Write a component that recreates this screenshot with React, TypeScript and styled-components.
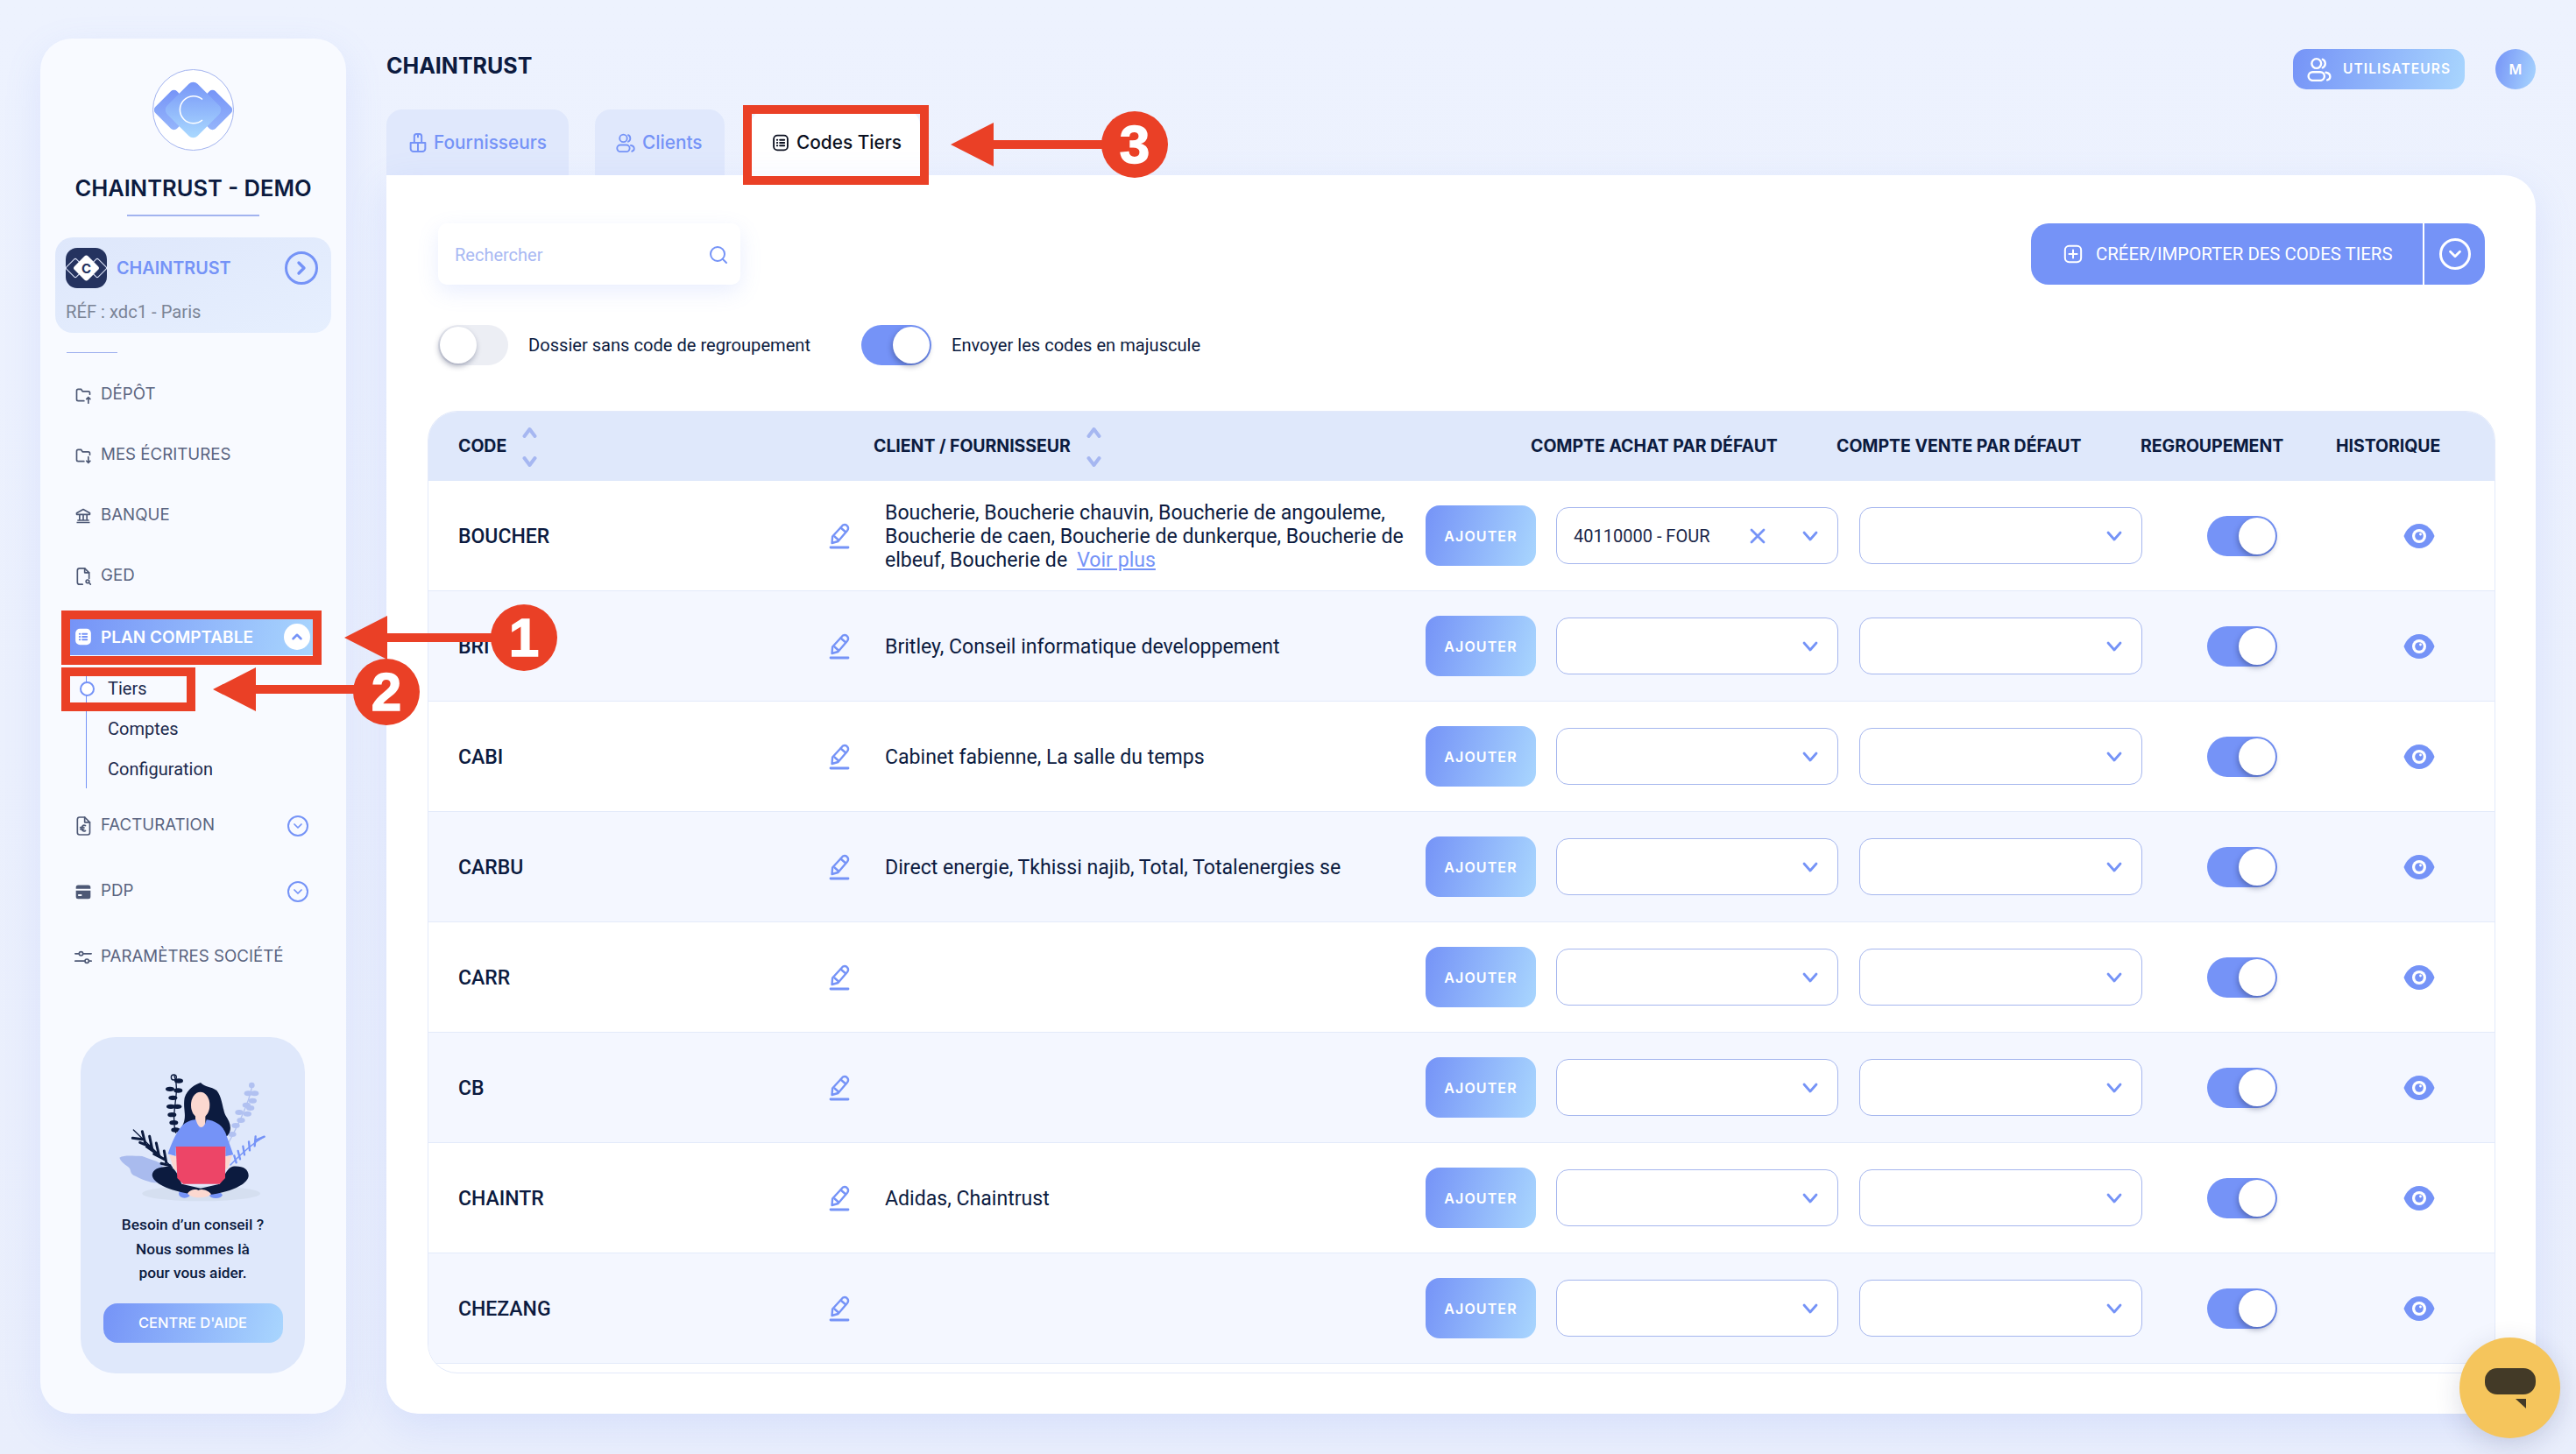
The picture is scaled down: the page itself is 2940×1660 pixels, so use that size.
import React from 'react';
import styled, { createGlobalStyle } from 'styled-components';
import { ChevronDown, ChevronUp, ChevronRight, Search } from 'lucide-react';

const BLUE = '#7593f7';
const NAVY = '#0c1b3f';
const HEAD = "'Inter', 'Liberation Sans', sans-serif";
const BODY = "'Roboto', 'Liberation Sans', sans-serif";
const GRADIENT = 'linear-gradient(105deg, #7593f7 0%, #a9d6fe 100%)';

const GlobalStyle = createGlobalStyle`
  html, body {
    margin: 0;
    padding: 0;
    background: #ecf1fd;
  }
  * {
    box-sizing: border-box;
  }
`;

// Page frame
const Page = styled.div`
  position: relative;
  display: flex;
  gap: 46px;
  width: 2940px;
  height: 1660px;
  padding: 44px 46px 46px 46px;
  overflow: hidden;
  font-family: ${BODY};
  color: ${NAVY};
  background: linear-gradient(180deg, #edf2fe 0%, #e9eefc 100%);
`;

// Sidebar
const Sidebar = styled.aside`
  display: flex;
  flex-direction: column;
  flex: 0 0 349px;
  padding: 35px 17px 46px;
  border-radius: 36px;
  background: #f8faff;
  box-shadow: 0 14px 44px rgba(117, 147, 247, 0.14);
`;

const LogoWrap = styled.div`
  display: flex;
  justify-content: center;
`;

const Brand = styled.div`
  margin-top: 26px;
  font: 600 25.5px/34px ${HEAD};
  text-align: center;
  white-space: nowrap;
`;

const BrandRule = styled.div`
  width: 151px;
  height: 2px;
  margin: 13px auto 0;
  background: #a2b3ef;
`;

const CompanyCard = styled.div`
  height: 109px;
  margin-top: 24px;
  padding: 12px 15px 0 12px;
  border-radius: 20px;
  background: linear-gradient(160deg, #dee7fb 0%, #e6effe 100%);
`;

const CompanyTop = styled.div`
  display: flex;
  align-items: center;
`;

const CompanyMark = styled.div`
  display: flex;
  align-items: center;
  justify-content: center;
  flex: 0 0 47px;
  height: 46px;
  border-radius: 13px;
  background: #25335f;
`;

const CompanyName = styled.div`
  flex: 1;
  margin-left: 11px;
  padding-top: 2px;
  font: 600 19.8px/1 ${HEAD};
  color: ${BLUE};
`;

const RoundToggle = styled.div<{ $size: number; $border: number; $filled?: boolean; $light?: boolean }>`
  display: flex;
  align-items: center;
  justify-content: center;
  flex: 0 0 ${({ $size }) => $size}px;
  height: ${({ $size }) => $size}px;
  border-radius: 50%;
  border: ${({ $border }) => $border}px solid ${({ $filled, $light }) => ($filled || $light ? '#fff' : BLUE)};
  background: ${({ $filled }) => ($filled ? '#fff' : 'transparent')};
  color: ${({ $light }) => ($light ? '#fff' : BLUE)};
`;

const CompanyRef = styled.div`
  margin-top: 15px;
  font: 400 20.2px/24px ${BODY};
  color: #7b8496;
`;

const ShortRule = styled.div`
  width: 58px;
  height: 1px;
  margin: 22px 0 13px 13px;
  background: #a2b3ef;
`;

const NavItem = styled.div<{ $tall?: boolean }>`
  display: flex;
  align-items: center;
  gap: 10px;
  height: ${({ $tall }) => ($tall ? 75 : 69)}px;
  padding: 0 26px 0 22px;
  font: 400 18.7px/1 ${HEAD};
  color: #5a6480;
  white-space: nowrap;
  svg.nav {
    flex: 0 0 20px;
    color: #4d5875;
  }
`;

const NavActive = styled.div`
  display: flex;
  align-items: center;
  gap: 10px;
  height: 42px;
  margin: 14px 21px 0 17px;
  padding: 0 3px 0 5px;
  font: 600 19px/1 ${HEAD};
  color: #fff;
  background: ${GRADIENT};
  white-space: nowrap;
`;

const NavLabel = styled.span`
  flex: 1;
`;

const SubNav = styled.div`
  position: relative;
  margin: 14px 0 5px 35px;
  padding-left: 24px;
  border-left: 1px solid ${BLUE};
`;

const SubItem = styled.div<{ $current?: boolean }>`
  position: relative;
  display: flex;
  align-items: center;
  height: 46px;
  padding-top: 1px;
  font: 400 20px/1 ${BODY};
  color: #1d2a4d;
  &::before {
    content: ${({ $current }) => ($current ? "''" : 'none')};
    position: absolute;
    left: -32px;
    top: 16px;
    width: 13px;
    height: 13px;
    border: 2px solid ${BLUE};
    border-radius: 50%;
    background: #fff;
  }
`;

const HelpCard = styled.div`
  display: flex;
  flex-direction: column;
  align-items: center;
  width: 256px;
  height: 384px;
  margin: auto 0 0 29px;
  padding-top: 26px;
  border-radius: 40px;
  background: #dfe8fb;
`;

const HelpFigure = styled.div`
  margin-left: 8px;
  height: 170px;
`;

const HelpText = styled.div`
  margin-top: 5px;
  font: 500 17.3px/27.5px ${BODY};
  text-align: center;
`;

const HelpButton = styled.div`
  display: flex;
  align-items: center;
  justify-content: center;
  width: 205px;
  height: 45px;
  margin-top: 20px;
  border-radius: 16px;
  font: 500 16.5px/1 ${HEAD};
  color: #fff;
  background: ${GRADIENT};
`;

// Main column
const Main = styled.main`
  display: flex;
  flex-direction: column;
  flex: 1;
  min-width: 0;
  padding-top: 12px;
`;

const TopBar = styled.div`
  display: flex;
  align-items: flex-start;
  height: 46px;
`;

const PageTitle = styled.h1`
  flex: 1;
  margin: 0;
  font: 700 25px/38px ${HEAD};
`;

const UsersButton = styled.div`
  display: flex;
  align-items: center;
  gap: 13px;
  width: 196px;
  height: 46px;
  padding-left: 16px;
  border-radius: 15px;
  font: 600 15.5px/1 ${HEAD};
  letter-spacing: 1.1px;
  color: #fff;
  background: ${GRADIENT};
`;

const Avatar = styled.div`
  display: flex;
  align-items: center;
  justify-content: center;
  width: 46px;
  height: 46px;
  margin-left: 35px;
  border-radius: 50%;
  font: 600 16px/1 ${HEAD};
  color: #fff;
  background: ${GRADIENT};
`;

const Tabs = styled.div`
  display: flex;
  gap: 30px;
  margin-top: 23px;
`;

const Tab = styled.div<{ $active?: boolean; $width: number; $pad: number }>`
  display: flex;
  align-items: center;
  gap: 8px;
  width: ${({ $width }) => $width}px;
  height: 75px;
  padding: 1px 0 0 ${({ $pad }) => $pad}px;
  border-radius: 18px 18px 0 0;
  font: 500 20.8px/1 ${HEAD};
  color: ${({ $active }) => ($active ? '#0b1020' : BLUE)};
  background: ${({ $active }) => ($active ? '#fff' : '#e0e8fc')};
`;

const Card = styled.section`
  display: flex;
  flex-direction: column;
  flex: 1;
  padding: 55px 46px 46px 47px;
  border-radius: 0 36px 36px 36px;
  background: #fff;
  box-shadow: 0 14px 44px rgba(117, 147, 247, 0.16);
`;

const ToolRow = styled.div`
  display: flex;
  justify-content: space-between;
  padding: 0 12px;
`;

const SearchBox = styled.div`
  display: flex;
  align-items: center;
  justify-content: space-between;
  width: 345px;
  height: 70px;
  padding: 2px 13px 0 19px;
  border-radius: 10px;
  font: 400 20px/1 ${BODY};
  color: #a9b9f3;
  background: #fff;
  box-shadow: 0 8px 24px rgba(117, 147, 247, 0.16);
`;

const CreateButton = styled.div`
  display: flex;
  align-items: stretch;
  height: 70px;
  border-radius: 20px;
  color: #fff;
  background: ${BLUE};
`;

const CreateLabel = styled.div`
  display: flex;
  align-items: center;
  gap: 15px;
  width: 449px;
  padding-left: 37px;
  border-right: 2px solid #fff;
  font: 400 20.4px/1 ${BODY};
`;

const CreateMenu = styled.div`
  display: flex;
  align-items: center;
  justify-content: center;
  width: 69px;
`;

const OptionRow = styled.div`
  display: flex;
  align-items: center;
  margin-top: 46px;
  padding-left: 12px;
`;

const OptionLabel = styled.span<{ $gap: number }>`
  margin: 0 ${({ $gap }) => $gap}px 0 23px;
  font: 400 20.1px/1 ${BODY};
  white-space: nowrap;
`;

const Switch = styled.div<{ $on?: boolean }>`
  display: flex;
  align-items: center;
  justify-content: ${({ $on }) => ($on ? 'flex-end' : 'flex-start')};
  flex: 0 0 80px;
  width: 80px;
  height: 46px;
  padding: 2px;
  border-radius: 23px;
  background: ${({ $on }) => ($on ? BLUE : '#eceef4')};
`;

const Knob = styled.div`
  width: 42px;
  height: 42px;
  border-radius: 50%;
  background: #fff;
  box-shadow: -1px 3px 6px rgba(20, 30, 70, 0.35);
`;

// Table
const Table = styled.div`
  display: flex;
  flex-direction: column;
  flex: 1;
  margin-top: 52px;
  overflow: hidden;
  border: 1px solid #e3eafa;
  border-radius: 34px;
`;

const HeadRow = styled.div`
  display: grid;
  grid-template-columns: 474px 750px 349px 347px 223px 1fr;
  flex: 0 0 80px;
  align-items: center;
  margin-top: -1px;
  padding: 2px 0 0 34px;
  font: 700 19.5px/1 ${HEAD};
  letter-spacing: -0.05px;
  white-space: nowrap;
  background: #dfe8fb;
`;

const HeadCell = styled.div`
  display: flex;
  align-items: center;
  gap: 18px;
`;

const SortStack = styled.div`
  display: flex;
  flex-direction: column;
  gap: 21px;
  color: #a6b7f1;
`;

const Row = styled.div<{ $alt: boolean }>`
  display: grid;
  grid-template-columns: 412px 46px 646px 149px 346px 323px 228px 1fr;
  flex: 0 0 126px;
  align-items: center;
  padding-left: 34px;
  border-bottom: 1px solid #e3eafa;
  background: ${({ $alt }) => ($alt ? '#f4f7ff' : '#fff')};
`;

const CodeCell = styled.div`
  padding-top: 2px;
  font: 500 23px/1 ${BODY};
`;

const EditCell = styled.div`
  display: flex;
  justify-content: center;
  color: ${BLUE};
`;

const NameCell = styled.div`
  padding: 2px 6px 0 29px;
  font: 400 23.1px/27px ${BODY};
`;

const MoreLink = styled.a`
  margin-left: 11px;
  color: ${BLUE};
  text-decoration: underline;
`;

const AddButton = styled.div`
  display: flex;
  align-items: center;
  justify-content: center;
  width: 126px;
  height: 69px;
  border-radius: 16px;
  font: 600 16px/1 ${HEAD};
  letter-spacing: 1.1px;
  color: #fff;
  background: ${GRADIENT};
`;

const Select = styled.div<{ $width: number }>`
  display: flex;
  align-items: center;
  width: ${({ $width }) => $width}px;
  height: 65px;
  padding: 0 22px 0 19px;
  border: 1px solid #a5b6ee;
  border-radius: 14px;
  font: 400 20px/1 ${BODY};
  background: #fff;
  color: #1b2748;
`;

const SelectValue = styled.span`
  flex: 1;
  white-space: nowrap;
`;

const ClearIcon = styled.span`
  display: flex;
  margin-right: 41px;
  color: ${BLUE};
`;

const ArrowIcon = styled.span`
  display: flex;
  margin-left: auto;
  color: ${BLUE};
`;

const Centered = styled.div<{ $shift?: number }>`
  display: flex;
  justify-content: center;
  padding-left: ${({ $shift }) => $shift || 0}px;
`;

// Annotation layer and chat bubble lie over the page
const Overlay = styled.svg`
  position: absolute;
  inset: 0;
  pointer-events: none;
`;

const Badge = styled.div<{ $x: number; $y: number }>`
  position: absolute;
  left: ${({ $x }) => $x - 38}px;
  top: ${({ $y }) => $y - 38}px;
  display: flex;
  align-items: center;
  justify-content: center;
  width: 76px;
  height: 76px;
  border-radius: 50%;
  font: 700 62px/1 'Liberation Sans', sans-serif;
  -webkit-text-stroke: 1.5px #fff;
  color: #fff;
  background: #ea4026;
`;

const ChatBubble = styled.div`
  position: absolute;
  left: 2807px;
  top: 1527px;
  display: flex;
  align-items: center;
  justify-content: center;
  width: 115px;
  height: 115px;
  border-radius: 50%;
  background: #f5c55c;
  box-shadow: 0 8px 30px rgba(30, 40, 80, 0.16);
`;

// Drawings
const FolderIcon: React.FC<{ up?: boolean }> = ({ up }) => (
  <svg className="nav" width="20" height="20" viewBox="0 0 24 24" fill="none" stroke="currentColor" strokeWidth="2" strokeLinecap="round" strokeLinejoin="round">
    <path d="M13 20H5a2 2 0 0 1-2-2V6a2 2 0 0 1 2-2h4l2 3h8a2 2 0 0 1 2 2v2" />
    {up ? <path d="M19 23v-8M16.5 17.5 19 15l2.5 2.5" /> : <path d="M19 14v8M16.5 19.5 19 22l2.5-2.5" />}
  </svg>
);

const BankIcon = () => (
  <svg className="nav" width="20" height="20" viewBox="0 0 24 24" fill="none" stroke="currentColor" strokeWidth="2" strokeLinejoin="round">
    <path d="M3 8 12 3l9 5v2H3zM3 21h18M4 18h16M7 10v8M12 10v8M17 10v8" />
  </svg>
);

const DocSearchIcon = () => (
  <svg className="nav" width="20" height="22" viewBox="0 0 24 26" fill="none" stroke="currentColor" strokeWidth="2" strokeLinecap="round" strokeLinejoin="round">
    <path d="M11 24H7a3 3 0 0 1-3-3V5a3 3 0 0 1 3-3h7l6 6v8" />
    <path d="M14 2v6h6" />
    <circle cx="18" cy="20" r="2.2" />
    <path d="m20 22 2 2" />
  </svg>
);

const InvoiceIcon = () => (
  <svg className="nav" width="20" height="24" viewBox="0 0 24 28" fill="none" stroke="currentColor" strokeWidth="2" strokeLinecap="round" strokeLinejoin="round">
    <path d="M7 2h7l7 7v14a3 3 0 0 1-3 3H7a3 3 0 0 1-3-3V5a3 3 0 0 1 3-3z" />
    <path d="M14 2v7h7M15 13.5c-3-1.5-5 .5-5 3.5s2 5 5 3.5M8 16h5M8 18.5h5" />
  </svg>
);

const CardIcon = () => (
  <svg className="nav" width="20" height="20" viewBox="0 0 24 24" fill="currentColor">
    <path d="M5 3h14a3 3 0 0 1 3 3v2H2V6a3 3 0 0 1 3-3zM2 10.500h20V19a3 3 0 0 1-3 3H5a3 3 0 0 1-3-3zM5 15.500v2.500h5v-2.500z" fillRule="evenodd" />
  </svg>
);

const SlidersIcon = () => (
  <svg className="nav" width="20" height="20" viewBox="0 0 24 24" fill="none" stroke="currentColor" strokeWidth="2" strokeLinecap="round">
    <path d="M1 7h5M12 7h11M1 17h13M20 17h3" />
    <circle cx="9" cy="7" r="2.600" />
    <circle cx="17" cy="17" r="2.600" />
  </svg>
);

const ListIcon: React.FC<{ size: number; solid?: boolean }> = ({ size, solid }) => (
  <svg width={size} height={size} viewBox="0 0 24 24" fill="none">
    <rect x="2.500" y="2" width="19" height="20" rx="5" fill={solid ? '#fff' : 'none'} stroke={solid ? '#fff' : 'currentColor'} strokeWidth="2.200" />
    <path d="M11 8h6M11 12h6M11 16h6M7 8h.5M7 12h.5M7 16h.5" stroke={solid ? BLUE : 'currentColor'} strokeWidth="2.400" strokeLinecap="round" />
  </svg>
);

const PackageIcon = () => (
  <svg width="20" height="24" viewBox="0 0 24 28" fill="none" stroke="currentColor" strokeWidth="2.400" strokeLinejoin="round">
    <path d="M7 14V5a3 3 0 0 1 3-3h4a3 3 0 0 1 3 3v9z" />
    <path d="M12 2v5M2 14h20v8a4 4 0 0 1-4 4H6a4 4 0 0 1-4-4zM12 14v12" />
  </svg>
);

const PeopleIcon: React.FC<{ size: number }> = ({ size }) => (
  <svg width={size} height={size} viewBox="0 0 26 26" fill="none" stroke="currentColor" strokeWidth="2.200" strokeLinecap="round">
    <circle cx="10" cy="7" r="5" />
    <path d="M16.500 2.500a5 5 0 0 1 0 9" />
    <path d="M6 16h8a4.500 4.500 0 0 1 0 9H6a4.500 4.500 0 0 1 0-9z" />
    <path d="M20 16.500c3 .5 4.500 2.500 4.500 4.500s-1 3-3 3.500" />
  </svg>
);

const PenIcon = () => (
  <svg width="24" height="30" viewBox="0 0 24 30" fill="none" stroke="currentColor" strokeWidth="2.400" strokeLinecap="round" strokeLinejoin="round">
    <path d="M16 2.500c2-1 4-.4 5.200 1.200 1.200 1.700 1 3.500-.2 5L10.500 21 3.500 23l.6-7.500z" />
    <path d="m13.500 5.500 5.800 5M6.500 15.500l4.500 4" />
    <path d="M2 28h20" strokeWidth="2.800" />
  </svg>
);

const EyeIcon = () => (
  <svg width="36" height="30" viewBox="0 0 36 30">
    <path d="M18 1C27 1 33 8 35.500 15 33 22 27 29 18 29S3 22 .5 15C3 8 9 1 18 1z" fill={BLUE} />
    <circle cx="18" cy="15" r="8" fill="#fff" />
    <circle cx="18" cy="15" r="4.800" fill={BLUE} />
    <circle cx="19.500" cy="13" r="1.400" fill="#fff" />
  </svg>
);

const PlusSquareIcon = () => (
  <svg width="22" height="22" viewBox="0 0 24 24" fill="none" stroke="currentColor" strokeWidth="2.200" strokeLinecap="round">
    <rect x="2" y="2" width="20" height="20" rx="5" />
    <path d="M12 7v10M7 12h10" />
  </svg>
);

const ThinX = () => (
  <svg width="20" height="20" viewBox="0 0 20 20" fill="none" stroke="currentColor" strokeWidth="2.800" strokeLinecap="round">
    <path d="m3 3 14 14M17 3 3 17" />
  </svg>
);

const SelectChevron = () => (
  <svg width="18" height="12" viewBox="0 0 18 12" fill="none" stroke="currentColor" strokeWidth="2.800" strokeLinecap="round" strokeLinejoin="round">
    <path d="m2 2 7 8 7-8" />
  </svg>
);

const SortIcon = () => (
  <SortStack>
    <svg width="17" height="12" viewBox="0 0 17 12" fill="none" stroke="currentColor" strokeWidth="4" strokeLinecap="round" strokeLinejoin="round">
      <path d="m2.500 10 6-8 6 8" />
    </svg>
    <svg width="17" height="12" viewBox="0 0 17 12" fill="none" stroke="currentColor" strokeWidth="4" strokeLinecap="round" strokeLinejoin="round">
      <path d="m2.500 2 6 8 6-8" />
    </svg>
  </SortStack>
);

const BrandLogo = () => (
  <svg width="93" height="93" viewBox="0 0 93 93">
    <defs>
      <linearGradient id="logoMain" x1="0" y1="0" x2="1" y2="1">
        <stop offset="0" stopColor="#7593f7" />
        <stop offset="1" stopColor="#acdcff" />
      </linearGradient>
      <linearGradient id="logoSide" x1="0" y1="0" x2="1" y2="1">
        <stop offset="0" stopColor="#7593f7" />
        <stop offset="1" stopColor="#96b6fb" />
      </linearGradient>
    </defs>
    <circle cx="46.500" cy="46.500" r="46" fill="#fff" stroke="#a2b3ef" />
    <rect x="7" y="29" width="35" height="35" rx="5" fill="url(#logoSide)" transform="rotate(45 24.500 46.500)" />
    <rect x="51" y="29" width="35" height="35" rx="5" fill="url(#logoSide)" transform="rotate(45 68.500 46.500)" />
    <rect x="22" y="22" width="49" height="49" rx="7" fill="url(#logoMain)" transform="rotate(45 46.500 46.500)" />
    <path d="M57 34.500A15.500 15.500 0 1 0 57 58" fill="none" stroke="#fff" strokeWidth="1.600" />
  </svg>
);

const SmallMark = () => (
  <svg width="47" height="46" viewBox="0 0 47 46">
    <rect x="3" y="15" width="16" height="16" rx="2" fill="none" stroke="#dfe6fb" transform="rotate(45 11 23)" />
    <rect x="28" y="15" width="16" height="16" rx="2" fill="none" stroke="#dfe6fb" transform="rotate(45 36 23)" />
    <rect x="12.500" y="12" width="22" height="22" rx="3" fill="#fff" transform="rotate(45 23.500 23)" />
    <text x="23.500" y="28.500" textAnchor="middle" fontFamily="Inter, sans-serif" fontWeight="700" fontSize="15" fill="#25335f">C</text>
  </svg>
);

// leaf positions read off the reference, in the drawing's own 630x510 space
const DARK_VINE = [[255, 72], [225, 100], [253, 105], [235, 130], [250, 160], [228, 160], [232, 188], [238, 215], [244, 240]];
const PALE_VINE = [[515, 115], [493, 115], [508, 140], [487, 155], [500, 165], [462, 180], [490, 185], [468, 207], [450, 225], [438, 255]];

const Illustration = () => (
  <svg width="210" height="170" viewBox="0 0 630 510">
    <ellipse cx="332" cy="458" rx="202" ry="26" fill="#d5dff0" />
    <path d="M52 335C70 325 100 330 130 330 170 345 190 350 200 360L190 420C165 425 130 410 100 395 85 385 95 375 80 365 65 355 55 345 52 335Z" fill="#a9bbee" />
    <g fill="none" stroke="#0c1b3f" strokeLinecap="round">
      <path d="M240 55C262 110 225 180 245 250" strokeWidth="4" />
      <path d="M100 240 232 368" strokeWidth="4" />
      <path d="M130 245 140 285M97 268 130 272M155 262 165 310M122 283 157 297M178 285 188 330M145 297 178 320M205 312 212 350M170 322 205 340M195 355 225 362" strokeWidth="9" />
    </g>
    {DARK_VINE.map(([x, y]) => (
      <ellipse key={`${x}-${y}`} cx={x} cy={y} rx="15" ry="8" fill="#0c1b3f" />
    ))}
    <circle cx="238" cy="60" r="9" fill="none" stroke="#0c1b3f" strokeWidth="4" />
    <path d="M505 95C495 150 460 220 425 285" fill="none" stroke="#b1c1f1" strokeWidth="4" />
    <circle cx="505" cy="87" r="10" fill="#b1c1f1" />
    {PALE_VINE.map(([x, y]) => (
      <ellipse key={`${x}-${y}`} cx={x} cy={y} rx="14" ry="9" fill="#b1c1f1" />
    ))}
    <g fill="none" stroke={BLUE} strokeLinecap="round">
      <path d="M548 263C510 285 470 320 432 360" strokeWidth="4" />
      <path d="M518 262 515 295M495 280 498 310M475 296 480 325M458 312 465 340M445 328 452 352M548 263 520 275" strokeWidth="7" />
    </g>
    <path d="M330 78C310 85 285 100 275 130 268 170 285 190 268 225L420 262C440 240 432 215 415 190 405 170 405 130 385 105 365 90 345 95 330 78Z" fill="#0c1b3f" />
    <ellipse cx="329" cy="155" rx="32" ry="45" fill="#fbd8d0" />
    <path d="M312 180h34v40a17 17 0 0 1-34 0z" fill="#fbd8d0" />
    <path d="M270 222C290 208 305 205 314 205 322 240 342 240 350 205 380 208 405 225 415 250L442 325 415 330V300H245V330L218 322C230 285 250 240 270 222Z" fill={BLUE} />
    <path d="M222 325l24 6 8 50-15-5zM438 326l-24 6-6 45 15-5z" fill="#fbd8d0" />
    <ellipse cx="275" cy="458" rx="20" ry="15" fill={BLUE} />
    <ellipse cx="382" cy="463" rx="22" ry="11" fill={BLUE} />
    <path d="M164 395C165 375 185 365 225 365 245 372 255 400 265 425L330 440 395 425C410 400 420 370 440 365 475 362 495 375 494 398 490 430 420 455 360 462L300 460C240 450 170 430 164 395Z" fill="#0c1b3f" />
    <path d="M285 458C300 438 320 445 322 447 335 438 360 450 366 460 350 476 300 476 285 458Z" fill="#fbd8d0" />
    <path d="M245 297H415L414 405 395 425H270L250 405Z" fill="#ed4567" />
  </svg>
);

const ChatIcon = () => (
  <svg width="58" height="46" viewBox="0 0 58 46" fill="#433a27">
    <rect width="58" height="30" rx="14" />
    <path d="M35 35h12v11z" />
  </svg>
);

type TierRow = { code: string; names?: string; more?: boolean; achat?: string };

const ROWS: TierRow[] = [
  {
    code: 'BOUCHER',
    names: 'Boucherie, Boucherie chauvin, Boucherie de angouleme, Boucherie de caen, Boucherie de dunkerque, Boucherie de elbeuf, Boucherie de',
    more: true,
    achat: '40110000 - FOUR',
  },
  { code: 'BRI', names: 'Britley, Conseil informatique developpement' },
  { code: 'CABI', names: 'Cabinet fabienne, La salle du temps' },
  { code: 'CARBU', names: 'Direct energie, Tkhissi najib, Total, Totalenergies se' },
  { code: 'CARR' },
  { code: 'CB' },
  { code: 'CHAINTR', names: 'Adidas, Chaintrust' },
  { code: 'CHEZANG' },
];

const SelectField: React.FC<{ width: number; value?: string }> = ({ width, value }) => (
  <Select $width={width}>
    {value && <SelectValue>{value}</SelectValue>}
    {value && (
      <ClearIcon>
        <ThinX />
      </ClearIcon>
    )}
    <ArrowIcon>
      <SelectChevron />
    </ArrowIcon>
  </Select>
);

const Annotations = () => (
  <Overlay width="2940" height="1660" viewBox="0 0 2940 1660">
    <g fill="none" stroke="#ea4026" strokeWidth="10">
      <rect x="75" y="702" width="287" height="52" />
      <rect x="75" y="767" width="143" height="40" />
      <rect x="853" y="125" width="202" height="81" />
    </g>
    <g fill="#ea4026">
      <path d="M393 728 442 703V723H570V733H442V753Z" />
      <path d="M243 787 292 762V782H420V792H292V812Z" />
      <path d="M1085 165 1134 140V160H1270V170H1134V190Z" />
    </g>
  </Overlay>
);

const App: React.FC = () => (
  <Page>
    <GlobalStyle />
    <Sidebar>
      <LogoWrap>
        <BrandLogo />
      </LogoWrap>
      <Brand>CHAINTRUST - DEMO</Brand>
      <BrandRule />
      <CompanyCard>
        <CompanyTop>
          <CompanyMark>
            <SmallMark />
          </CompanyMark>
          <CompanyName>CHAINTRUST</CompanyName>
          <RoundToggle $size={38} $border={3}>
            <ChevronRight size={24} strokeWidth={3.400} />
          </RoundToggle>
        </CompanyTop>
        <CompanyRef>RÉF : xdc1 - Paris</CompanyRef>
      </CompanyCard>
      <ShortRule />
      <NavItem>
        <FolderIcon up />
        DÉPÔT
      </NavItem>
      <NavItem>
        <FolderIcon />
        MES ÉCRITURES
      </NavItem>
      <NavItem>
        <BankIcon />
        BANQUE
      </NavItem>
      <NavItem>
        <DocSearchIcon />
        GED
      </NavItem>
      <NavActive>
        <ListIcon size={20} solid />
        <NavLabel>PLAN COMPTABLE</NavLabel>
        <RoundToggle $size={30} $border={0} $filled>
          <ChevronUp size={18} strokeWidth={3.400} />
        </RoundToggle>
      </NavActive>
      <SubNav>
        <SubItem $current>Tiers</SubItem>
        <SubItem>Comptes</SubItem>
        <SubItem>Configuration</SubItem>
      </SubNav>
      <NavItem $tall>
        <InvoiceIcon />
        <NavLabel>FACTURATION</NavLabel>
        <RoundToggle $size={24} $border={2}>
          <ChevronDown size={16} strokeWidth={2.600} />
        </RoundToggle>
      </NavItem>
      <NavItem $tall>
        <CardIcon />
        <NavLabel>PDP</NavLabel>
        <RoundToggle $size={24} $border={2}>
          <ChevronDown size={16} strokeWidth={2.600} />
        </RoundToggle>
      </NavItem>
      <NavItem $tall>
        <SlidersIcon />
        PARAMÈTRES SOCIÉTÉ
      </NavItem>
      <HelpCard>
        <HelpFigure>
          <Illustration />
        </HelpFigure>
        <HelpText>
          Besoin d’un conseil ?<br />
          Nous sommes là<br />
          pour vous aider.
        </HelpText>
        <HelpButton>CENTRE D'AIDE</HelpButton>
      </HelpCard>
    </Sidebar>

    <Main>
      <TopBar>
        <PageTitle>CHAINTRUST</PageTitle>
        <UsersButton>
          <PeopleIcon size={28} />
          UTILISATEURS
        </UsersButton>
        <Avatar>M</Avatar>
      </TopBar>
      <Tabs>
        <Tab $width={208} $pad={26}>
          <PackageIcon />
          Fournisseurs
        </Tab>
        <Tab $width={148} $pad={24}>
          <PeopleIcon size={22} />
          Clients
        </Tab>
        <Tab $width={193} $pad={24} $active>
          <ListIcon size={20} />
          Codes Tiers
        </Tab>
      </Tabs>
      <Card>
        <ToolRow>
          <SearchBox>
            Rechercher
            <Search size={24} color={BLUE} strokeWidth={2} />
          </SearchBox>
          <CreateButton>
            <CreateLabel>
              <PlusSquareIcon />
              CRÉER/IMPORTER DES CODES TIERS
            </CreateLabel>
            <CreateMenu>
              <RoundToggle $size={36} $border={3} $light>
                <ChevronDown size={22} strokeWidth={3} />
              </RoundToggle>
            </CreateMenu>
          </CreateButton>
        </ToolRow>
        <OptionRow>
          <Switch>
            <Knob />
          </Switch>
          <OptionLabel $gap={58}>Dossier sans code de regroupement</OptionLabel>
          <Switch $on>
            <Knob />
          </Switch>
          <OptionLabel $gap={0}>Envoyer les codes en majuscule</OptionLabel>
        </OptionRow>
        <Table>
          <HeadRow>
            <HeadCell>
              CODE
              <SortIcon />
            </HeadCell>
            <HeadCell>
              CLIENT / FOURNISSEUR
              <SortIcon />
            </HeadCell>
            <HeadCell>COMPTE ACHAT PAR DÉFAUT</HeadCell>
            <HeadCell>COMPTE VENTE PAR DÉFAUT</HeadCell>
            <HeadCell>REGROUPEMENT</HeadCell>
            <HeadCell>HISTORIQUE</HeadCell>
          </HeadRow>
          {ROWS.map((row, index) => (
            <Row key={row.code} $alt={index % 2 === 1}>
              <CodeCell>{row.code}</CodeCell>
              <EditCell>
                <PenIcon />
              </EditCell>
              <NameCell>
                {row.names}
                {row.more && <MoreLink>Voir plus</MoreLink>}
              </NameCell>
              <AddButton>AJOUTER</AddButton>
              <SelectField width={322} value={row.achat} />
              <SelectField width={323} />
              <Centered>
                <Switch $on>
                  <Knob />
                </Switch>
              </Centered>
              <Centered $shift={2}>
                <EyeIcon />
              </Centered>
            </Row>
          ))}
        </Table>
      </Card>
    </Main>

    <Annotations />
    <Badge $x={598} $y={728}>1</Badge>
    <Badge $x={441} $y={790}>2</Badge>
    <Badge $x={1295} $y={165}>3</Badge>
    <ChatBubble>
      <ChatIcon />
    </ChatBubble>
  </Page>
);

export default App;
